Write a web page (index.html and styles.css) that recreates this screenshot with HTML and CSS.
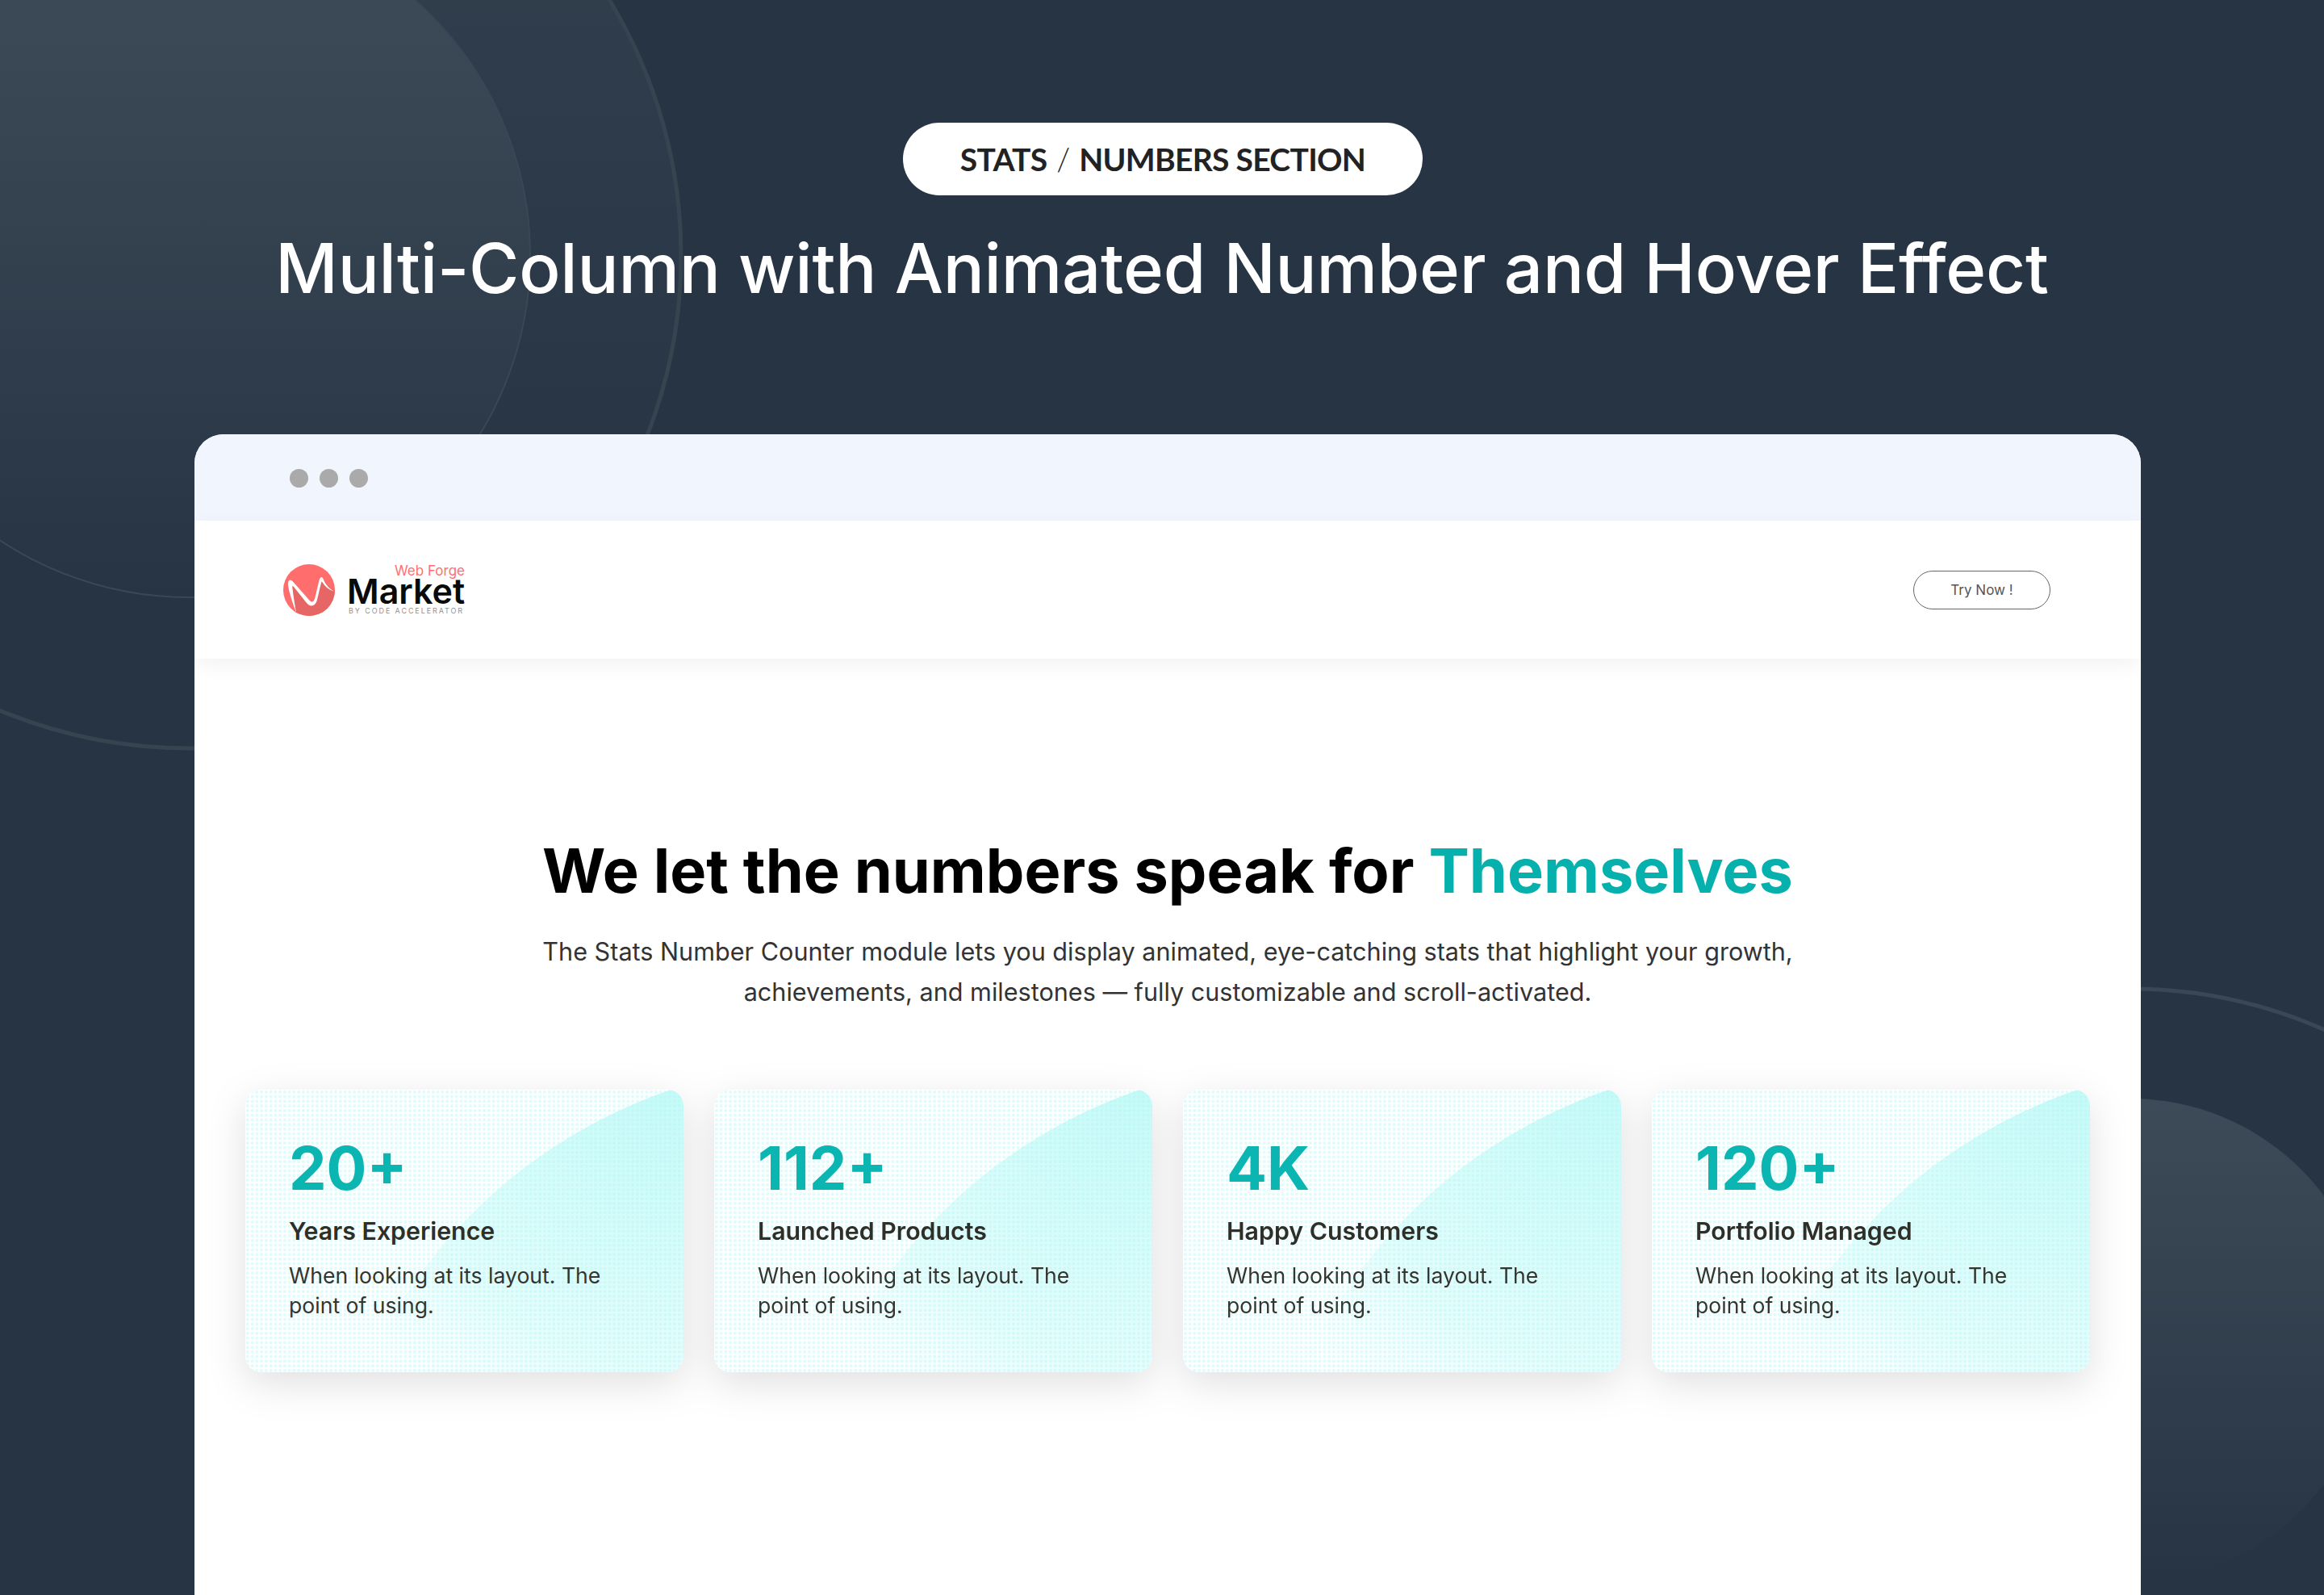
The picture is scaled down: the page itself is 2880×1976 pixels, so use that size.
FILE: index.html
```html
<!DOCTYPE html>
<html lang="en">
<head>
<meta charset="utf-8">
<title>Stats / Numbers Section</title>
<link rel="stylesheet" href="styles.css">
</head>
<body>
<svg class="backdrop" viewBox="0 0 2880 1976" aria-hidden="true">
  <defs>
    <linearGradient id="fillA" x1="0" y1="0" x2="0" y2="1">
      <stop offset="0" stop-color="#3f4c58"/>
      <stop offset="1" stop-color="#273444"/>
    </linearGradient>
    <linearGradient id="fillB" x1="0" y1="0" x2="0" y2="1">
      <stop offset="0" stop-color="#34414f"/>
      <stop offset="0.8" stop-color="#273444"/>
    </linearGradient>
    <linearGradient id="fillC" x1="0" y1="0" x2="0" y2="1">
      <stop offset="0" stop-color="#3d4a57"/>
      <stop offset="1" stop-color="#273444"/>
    </linearGradient>
  </defs>
  <circle cx="234" cy="317" r="610" fill="url(#fillB)" stroke="#37444f" stroke-width="5"/>
  <circle cx="234" cy="317" r="423" fill="url(#fillA)" stroke="#3a4755" stroke-width="2"/>
  <circle cx="2640" cy="1820" r="595" fill="none" stroke="#3a4755" stroke-width="5"/>
  <circle cx="2640" cy="1660" r="299" fill="url(#fillC)"/>
</svg>

<header class="intro">
  <div class="pill">STATS <span class="slash">/</span> NUMBERS SECTION</div>
  <h1 class="title">Multi-Column with Animated Number and Hover Effect</h1>
</header>

<main class="window">
  <div class="chrome">
    <span class="dot"></span><span class="dot"></span><span class="dot"></span>
  </div>
  <nav class="nav">
    <div class="logo">
      <svg class="logo-mark" viewBox="0 0 64 64" aria-hidden="true">
        <defs><clipPath id="disc"><circle cx="32" cy="32" r="32"/></clipPath></defs>
        <g clip-path="url(#disc)">
          <rect width="64" height="64" fill="#ff6d6d"/>
          <path d="M7 22 C9 16 12 20 15 25 L33 46 C38 51 40 47 42 38 L46 19 C48 14 50 18 53 23 C56 28 60 30 64 33 L64 64 L16 64 Z" fill="#e66565"/>
          <path d="M16 60 C11 46 7 34 6 26 C5.500 19 9 18 12 21.500 L31 43 C36 49 38 47 39.500 41 L44.500 20 C46 15 48.500 15 50 19 C53 26 57 30 63 33.500 C57 32 52 28 49 23 C48 21 47.500 21 47 23 L42 44 C40 52 34 54 29 48 L13 28 C11.500 26 11 27 11.500 30 C12.500 40 14.500 50 16 60 Z" fill="#fff"/>
        </g>
      </svg>
      <div class="wordmark">
        <span class="wm-top">Web Forge</span>
        <span class="wm-main">Market</span>
        <span class="wm-sub">BY CODE ACCELERATOR</span>
      </div>
    </div>
    <a class="try" href="#">Try Now !</a>
  </nav>
  <section class="stats">
    <h2 class="stats-title">We let the numbers speak for <em>Themselves</em></h2>
    <p class="stats-lead">The Stats Number Counter module lets you display animated, eye-catching stats that highlight your growth, achievements, and milestones — fully customizable and scroll-activated.</p>
    <div class="cards">
      <article class="card">
        <div class="num">20+</div>
        <h3 class="card-title">Years Experience</h3>
        <p class="card-text">When looking at its layout. The point of using.</p>
      </article>
      <article class="card">
        <div class="num">112+</div>
        <h3 class="card-title">Launched Products</h3>
        <p class="card-text">When looking at its layout. The point of using.</p>
      </article>
      <article class="card">
        <div class="num">4K</div>
        <h3 class="card-title">Happy Customers</h3>
        <p class="card-text">When looking at its layout. The point of using.</p>
      </article>
      <article class="card">
        <div class="num">120+</div>
        <h3 class="card-title">Portfolio Managed</h3>
        <p class="card-text">When looking at its layout. The point of using.</p>
      </article>
    </div>
  </section>
</main>
</body>
</html>
```

FILE: styles.css
```css
* { box-sizing: border-box; }

html, body {
  margin: 0;
  padding: 0;
}

body {
  position: relative;
  width: 2880px;
  height: 1976px;
  overflow: hidden;
  background: #273444;
  font-family: "Inter", "Liberation Sans", sans-serif;
}

.backdrop {
  position: absolute;
  left: 0;
  top: 0;
  width: 2880px;
  height: 1976px;
}

.intro {
  position: relative;
  display: flex;
  flex-direction: column;
  align-items: center;
  padding-top: 152px;
  height: 538px;
}

.pill {
  width: 644px;
  height: 90px;
  margin-left: 2px;
  border-radius: 45px;
  background: #fff;
  color: #222;
  display: flex;
  align-items: center;
  justify-content: center;
  font-family: "Lato", "Inter", sans-serif;
  font-size: 39px;
  font-weight: 700;
  letter-spacing: -0.700px;
  white-space: pre;
}

.slash {
  margin: 0 3px;
  font-weight: 300;
}

.title {
  margin: 36px 0 0;
  color: #fff;
  font-size: 85px;
  line-height: 110px;
  font-weight: 500;
  letter-spacing: -0.220px;
  white-space: nowrap;
}

.window {
  position: relative;
  margin-left: 241px;
  width: 2412px;
  height: 1438px;
  background: #fff;
  border-radius: 36px 36px 0 0;
  overflow: hidden;
}

.chrome {
  height: 107px;
  background: #f1f5fd;
  display: flex;
  align-items: center;
  gap: 14px;
  padding: 1px 0 0 118px;
}

.dot {
  width: 23px;
  height: 23px;
  border-radius: 50%;
  background: #aaa;
}

.nav {
  position: relative;
  height: 171px;
  background: #fff;
  box-shadow: 0 8px 24px rgba(0, 0, 0, 0.05);
  display: flex;
  align-items: center;
  justify-content: space-between;
  padding: 0 112px 0 110px;
}

.logo {
  display: flex;
  align-items: center;
  gap: 15px;
}

.logo-mark {
  width: 64px;
  height: 64px;
  display: block;
}

.wordmark {
  display: flex;
  flex-direction: column;
  width: 146px;
}

.wm-top {
  align-self: flex-end;
  color: #ff7070;
  font-size: 17px;
  line-height: 14px;
}

.wm-main {
  color: #0a0a0a;
  font-size: 43px;
  line-height: 36px;
  font-weight: 600;
}

.wm-sub {
  margin-top: 1px;
  padding-left: 2px;
  color: #988f8f;
  font-size: 9px;
  line-height: 11px;
  letter-spacing: 1.900px;
  white-space: nowrap;
}

.try {
  width: 170px;
  height: 48px;
  border: 1.500px solid #666;
  border-radius: 24px;
  display: flex;
  align-items: center;
  justify-content: center;
  color: #555;
  font-size: 17px;
  text-decoration: none;
}

.stats {
  padding-top: 215px;
  display: flex;
  flex-direction: column;
  align-items: center;
}

.stats-title {
  margin: 0;
  color: #000;
  font-size: 75.600px;
  line-height: 96px;
  font-weight: 700;
  white-space: nowrap;
}

.stats-title em {
  font-style: normal;
  color: #06b0ac;
}

.stats-lead {
  margin: 27px 0 0;
  width: 1600px;
  text-align: center;
  color: #333;
  font-size: 30.600px;
  line-height: 50px;
}

.cards {
  margin-top: 96px;
  display: grid;
  grid-template-columns: repeat(4, 543px);
  gap: 38px;
  filter: drop-shadow(0 14px 24px rgba(0, 0, 0, 0.12));
}

.card {
  position: relative;
  height: 350px;
  padding: 57px 40px 0 54px;
  border-radius: 20px;
  overflow: hidden;
  background: #fff;
}

.card::before {
  content: "";
  position: absolute;
  left: 94px;
  top: -34px;
  width: 1278px;
  height: 1278px;
  border-radius: 50%;
  background: radial-gradient(circle at 432px 34px, #c6faf7 0, #d8fcfa 200px, #e6fdfc 340px, #f6fefe 410px, #ffffff 480px);
}

.card::after {
  content: "";
  position: absolute;
  inset: 0;
  background-image: radial-gradient(circle at 50% 50%, rgba(170, 245, 245, 0.36) 0, rgba(170, 245, 245, 0.36) 1.800px, rgba(255, 255, 255, 0) 2.400px);
  background-size: 5.750px 5.750px;
}

.num, .card-title, .card-text {
  position: relative;
  z-index: 1;
}

.num {
  color: #0ab5b2;
  font-size: 74px;
  line-height: 80px;
  font-weight: 700;
}

.card-title {
  margin: 18px 0 0;
  color: #2d2f28;
  font-size: 30.300px;
  line-height: 40px;
  font-weight: 600;
}

.card-text {
  margin: 17px 0 0;
  color: #33352e;
  font-size: 26.600px;
  line-height: 36.500px;
}
```
